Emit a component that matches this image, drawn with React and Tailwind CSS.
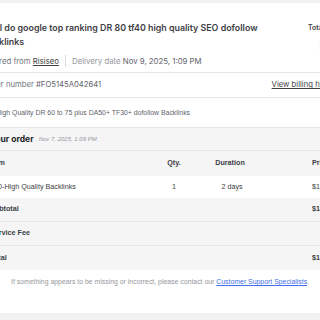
export default function App() {
  return (
    <div className="w-[320px] h-[320px] overflow-hidden bg-[#f2f2f2] pt-[3px]">
      <div className="ml-[-40px] w-[440px] h-[310px] bg-white font-['Inter',sans-serif] text-[#404145]">
        {/* header */}
        <div className="flex justify-between pl-[23px] pr-[40px] pt-[18px] pb-[5px] border-b border-[#e4e5e7]">
          <div className="w-[310px]">
            <h1 className="text-[8.9px] leading-[14px] font-semibold text-[#404145]">
              I will do google top ranking DR 80 tf40 high quality SEO dofollow Backlinks
            </h1>
            <div className="mt-[6px] ml-[-2px] flex items-center text-[7.8px] leading-[12px]">
              <span className="text-[#74767e]">
                Ordered from <span className="underline text-[#404145]">Risiseo</span>
              </span>
              <span className="mx-[6px] w-px h-[12px] bg-[#dadbdd]" />
              <span className="text-[#95979d]">
                Delivery date <span className="text-[#62646a]">Nov 9, 2025, 1:09 PM</span>
              </span>
            </div>
          </div>
          <div className="w-[52px] pt-[2px]">
            <div className="text-[7px] leading-[10px] font-semibold text-[#404145]">Total price</div>
            <div className="mt-[8px] pl-[11px] text-[9px] text-[#d5d6d9]">$18</div>
          </div>
        </div>

        {/* order number */}
        <div className="flex justify-between items-center h-[25px] pl-[23px] pr-[60px] border-b border-[#e4e5e7] text-[7.7px]">
          <div className="text-[#74767e]">
            Order number <span className="text-[#62646a]">#FO5145A042641</span>
          </div>
          <a className="underline text-[#404145]">View billing history</a>
        </div>

        {/* description */}
        <div className="flex items-center h-[29px] pt-[2px] pl-[36px] font-['Liberation_Sans',sans-serif] text-[6.9px] text-[#62646a]">
          High Quality DR 60 to 75 plus DA50+ TF30+ dofollow Backlinks
        </div>

        {/* your order */}
        <div className="flex items-center h-[24px] pl-[30px] bg-[#f5f5f5] border-t border-b border-[#e4e5e7]">
          <span className="text-[8.5px] font-bold text-[#222325]">Your order</span>
          <span className="ml-[5px] mt-[1px] text-[6px] italic text-[#95979d] font-['Liberation_Sans',sans-serif]">Nov 7, 2025, 1:09 PM</span>
        </div>

        <div className="font-['Liberation_Sans',sans-serif] text-[7.2px] text-[#404145]">
          <div className="grid grid-cols-[190px_48px_64px_1fr] items-center h-[25px] bg-[#f5f5f5] font-bold">
            <div className="pl-[30px]">Item</div>
            <div className="text-center">Qty.</div>
            <div className="text-center">Duration</div>
            <div className="pl-[50px]">Price</div>
          </div>
          <div className="grid grid-cols-[190px_48px_64px_1fr] items-center h-[22px] bg-white">
            <div className="pl-[30px]">100-High Quality Backlinks</div>
            <div className="text-center">1</div>
            <div className="text-center pl-[4px]">2 days</div>
            <div className="pl-[50px]">$18</div>
          </div>
          <div className="grid grid-cols-[302px_1fr] items-center h-[24px] bg-[#f5f5f5] font-bold border-b border-[#e4e5e7]">
            <div className="pl-[30px]">Subtotal</div>
            <div className="pl-[50px]">$18</div>
          </div>
          <div className="grid grid-cols-[302px_1fr] items-center h-[24px] bg-[#f5f5f5] font-bold border-b border-[#e4e5e7]">
            <div className="pl-[30px]">Service Fee</div>
            <div className="pl-[58px]">$0</div>
          </div>
          <div className="grid grid-cols-[302px_1fr] items-center h-[24px] bg-[#f5f5f5] font-bold">
            <div className="pl-[30px]">Total</div>
            <div className="pl-[50px]">$18</div>
          </div>
          <div className="pt-[7px] pl-[51px] text-[6.9px] text-[#95979d]">
            If something appears to be missing or incorrect, please contact our{' '}
            <a className="underline text-[#446ee7]">Customer Support Specialists</a>.
          </div>
        </div>
      </div>
    </div>
  )
}
